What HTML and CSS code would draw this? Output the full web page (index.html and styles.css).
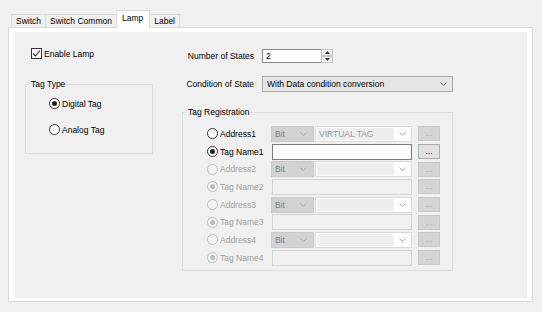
FILE: index.html
```html
<!DOCTYPE html>
<html lang="en">
<head>
    <meta charset="UTF-8">
    <title>Lamp</title>
    <link rel="stylesheet" href="styles.css">
</head>
<body>
<div class="dialog">
    <div class="tabs">
        <div class="tab">Switch</div>
        <div class="tab">Switch Common</div>
        <div class="tab active">Lamp</div>
        <div class="tab">Label</div>
    </div>

    <div class="panel">
        <div class="page">

            <div class="left">
                <div class="check-row">
                    <span class="check">
                        <svg width="9" height="9" viewBox="0 0 9 9"><path d="M1 4.5 L3.5 7 L8 1.5" fill="none" stroke="#222" stroke-width="1.1"/></svg>
                    </span>
                    Enable Lamp
                </div>

                <fieldset class="group tag-type">
                    <legend>Tag Type</legend>
                    <div class="radio-row"><span class="radio on"></span>Digital Tag</div>
                    <div class="radio-row"><span class="radio"></span>Analog Tag</div>
                </fieldset>
            </div>

            <div class="right">
                <div class="field-row">
                    <span class="field-label">Number of States</span>
                    <div class="spin">
                        <span class="spin-value">2</span>
                        <span class="spin-btns">
                            <span class="spin-btn"><svg width="5" height="3" viewBox="0 0 5 3"><path d="M0 3 L2.5 0 L5 3Z" fill="#333"/></svg></span>
                            <span class="spin-btn"><svg width="5" height="3" viewBox="0 0 5 3"><path d="M0 0 L2.5 3 L5 0Z" fill="#333"/></svg></span>
                        </span>
                    </div>
                </div>
                <div class="field-row">
                    <span class="field-label">Condition of State</span>
                    <div class="combo">
                        <span class="combo-text">With Data condition conversion</span>
                        <svg class="chev" width="7" height="4" viewBox="0 0 7 4"><path d="M0.5 0.5 L3.5 3.5 L6.5 0.5" fill="none" stroke="#666"/></svg>
                    </div>
                </div>

                <fieldset class="group tag-reg">
                    <legend>Tag Registration</legend>

                    <div class="reg-row">
                        <span class="reg-label"><span class="radio"></span>Address1</span>
                        <span class="reg-ctrl">
                            <span class="bit">Bit<svg class="chev" width="7" height="4" viewBox="0 0 7 4"><path d="M0.5 0.5 L3.5 3.5 L6.5 0.5" fill="none" stroke="#a8a8a8"/></svg></span>
                            <span class="addr"><span class="addr-field">VIRTUAL TAG</span><svg class="chev" width="7" height="4" viewBox="0 0 7 4"><path d="M0.5 0.5 L3.5 3.5 L6.5 0.5" fill="none" stroke="#b0b0b0"/></svg></span>
                        </span>
                        <span class="dots">...</span>
                    </div>
                    <div class="reg-row">
                        <span class="reg-label"><span class="radio on"></span>Tag Name1</span>
                        <span class="reg-ctrl"><span class="tag-input"></span></span>
                        <span class="dots enabled">...</span>
                    </div>

                    <div class="reg-row off">
                        <span class="reg-label"><span class="radio"></span>Address2</span>
                        <span class="reg-ctrl">
                            <span class="bit">Bit<svg class="chev" width="7" height="4" viewBox="0 0 7 4"><path d="M0.5 0.5 L3.5 3.5 L6.5 0.5" fill="none" stroke="#a8a8a8"/></svg></span>
                            <span class="addr"><span class="addr-field"></span><svg class="chev" width="7" height="4" viewBox="0 0 7 4"><path d="M0.5 0.5 L3.5 3.5 L6.5 0.5" fill="none" stroke="#b0b0b0"/></svg></span>
                        </span>
                        <span class="dots">...</span>
                    </div>
                    <div class="reg-row off">
                        <span class="reg-label"><span class="radio on"></span>Tag Name2</span>
                        <span class="reg-ctrl"><span class="tag-input"></span></span>
                        <span class="dots">...</span>
                    </div>

                    <div class="reg-row off">
                        <span class="reg-label"><span class="radio"></span>Address3</span>
                        <span class="reg-ctrl">
                            <span class="bit">Bit<svg class="chev" width="7" height="4" viewBox="0 0 7 4"><path d="M0.5 0.5 L3.5 3.5 L6.5 0.5" fill="none" stroke="#a8a8a8"/></svg></span>
                            <span class="addr"><span class="addr-field"></span><svg class="chev" width="7" height="4" viewBox="0 0 7 4"><path d="M0.5 0.5 L3.5 3.5 L6.5 0.5" fill="none" stroke="#b0b0b0"/></svg></span>
                        </span>
                        <span class="dots">...</span>
                    </div>
                    <div class="reg-row off">
                        <span class="reg-label"><span class="radio on"></span>Tag Name3</span>
                        <span class="reg-ctrl"><span class="tag-input"></span></span>
                        <span class="dots">...</span>
                    </div>

                    <div class="reg-row off">
                        <span class="reg-label"><span class="radio"></span>Address4</span>
                        <span class="reg-ctrl">
                            <span class="bit">Bit<svg class="chev" width="7" height="4" viewBox="0 0 7 4"><path d="M0.5 0.5 L3.5 3.5 L6.5 0.5" fill="none" stroke="#a8a8a8"/></svg></span>
                            <span class="addr"><span class="addr-field"></span><svg class="chev" width="7" height="4" viewBox="0 0 7 4"><path d="M0.5 0.5 L3.5 3.5 L6.5 0.5" fill="none" stroke="#b0b0b0"/></svg></span>
                        </span>
                        <span class="dots">...</span>
                    </div>
                    <div class="reg-row off">
                        <span class="reg-label"><span class="radio on"></span>Tag Name4</span>
                        <span class="reg-ctrl"><span class="tag-input"></span></span>
                        <span class="dots">...</span>
                    </div>
                </fieldset>
            </div>

        </div>
    </div>
</div>
</body>
</html>
```

FILE: styles.css
```css
body {
    margin: 0;
    background: #f0f0f0;
    font-family: "Liberation Sans", Arial, sans-serif;
    font-size: 8.5px;
    color: #000;
}
.dialog {
    padding: 10px 0 0 8px;
}

/* tabs */
.tabs {
    display: flex;
    align-items: flex-end;
    height: 18px;
    padding-left: 3px;
    margin-bottom: -1px;
    position: relative;
    z-index: 1;
}
.tab {
    height: 14px;
    line-height: 13px;
    padding: 0 4px;
    border: 1px solid #d9d9d9;
    box-sizing: border-box;
    background: #f0f0f0;
    margin-left: -1px;
}
.tab:first-child {
    margin-left: 0;
}
.tab.active {
    height: 18px;
    line-height: 15px;
    padding: 0 6px 0 5px;
    background: #fff;
    border-bottom: none;
}

.panel {
    width: 525px;
    height: 275px;
    box-sizing: border-box;
    border: 1px solid #d9d9d9;
    background: #fff;
    padding: 4px 5px 3px 6px;
}
.page {
    height: 100%;
    background: #f0f0f0;
    display: flex;
}

/* left column */
.left {
    width: 128px;
    padding: 15px 0 0 10px;
}
.check-row {
    display: flex;
    align-items: center;
    height: 13px;
    padding-left: 6px;
}
.check {
    width: 11px;
    height: 11px;
    box-sizing: border-box;
    border: 1px solid #333;
    background: #fff;
    margin-right: 2px;
    display: flex;
    align-items: center;
    justify-content: center;
}
.group {
    margin: 0;
    padding: 0;
    min-width: 0;
    border: 1px solid #dcdcdc;
}
.group legend {
    margin-left: 3px;
    padding: 0 2px;
    line-height: 11px;
}
.tag-type {
    margin-top: 19px;
    height: 66px;
    padding-top: 7px;
}
.tag-type .radio-row {
    margin-left: 23px;
}
.radio-row {
    display: flex;
    align-items: center;
    height: 13px;
    margin-bottom: 13px;
}
.radio {
    width: 11px;
    height: 11px;
    box-sizing: border-box;
    border: 1px solid #333;
    border-radius: 50%;
    background: #fff;
    margin-right: 2px;
    display: flex;
    align-items: center;
    justify-content: center;
    flex: none;
}
.radio.on::after {
    content: "";
    width: 5px;
    height: 5px;
    border-radius: 50%;
    background: #222;
}

/* right column */
.right {
    margin-left: 29px;
    padding-top: 17px;
}
.field-row {
    display: flex;
    align-items: center;
    margin-bottom: 13px;
}
.field-label {
    width: 72px;
    text-align: right;
    margin-right: 8px;
}
.spin {
    width: 71px;
    height: 14px;
    box-sizing: border-box;
    border: 1px solid #8a8a8a;
    background: #fff;
    display: flex;
    justify-content: space-between;
}
.spin-value {
    padding-left: 3px;
    line-height: 12px;
}
.spin-btns {
    display: flex;
    flex-direction: column;
    width: 11px;
}
.spin-btn {
    flex: 1;
    display: flex;
    align-items: center;
    justify-content: center;
    background: #f0f0f0;
    border: 1px solid #c4c4c4;
    margin: -1px -1px 0 0;
}
.spin-btn + .spin-btn {
    margin-top: 0;
    margin-bottom: -1px;
}
.combo {
    width: 191px;
    height: 16px;
    box-sizing: border-box;
    border: 1px solid #adadad;
    background: #e5e5e5;
    display: flex;
    align-items: center;
    justify-content: space-between;
    padding: 0 5px 0 4px;
}

.tag-reg {
    width: 271px;
    height: 164px;
    box-sizing: border-box;
    margin-top: 15px;
    padding-top: 7px;
}
.reg-row {
    display: flex;
    align-items: center;
    height: 17.7px;
    margin-left: 24px;
}
.reg-label {
    display: flex;
    align-items: center;
    width: 64px;
}
.reg-ctrl {
    display: flex;
    width: 141px;
    height: 16px;
}
.bit {
    width: 43px;
    box-sizing: border-box;
    background: #d2d2d2;
    border: 1px solid #cacaca;
    color: #808080;
    display: flex;
    align-items: center;
    justify-content: space-between;
    padding: 0 6px 0 3px;
}
.addr {
    width: 97px;
    margin-left: 1px;
    box-sizing: border-box;
    background: #fff;
    border: 1px solid #dadada;
    padding: 1px;
    display: flex;
    align-items: center;
}
.addr-field {
    flex: 1;
    height: 100%;
    background: #eeeeee;
    color: #949aa6;
    line-height: 12px;
    padding-left: 2px;
}
.addr .chev {
    margin: 0 4px 0 5px;
}
.tag-input {
    flex: 1;
    margin-left: 1px;
    border: 1px solid #7a7a7a;
    background: #fff;
}
.dots {
    width: 22px;
    height: 15px;
    box-sizing: border-box;
    margin-left: 6px;
    background: #d4d4d4;
    border: 1px solid #c8c8c8;
    color: #a8a8a8;
    text-align: center;
    line-height: 12px;
}
.dots.enabled {
    background: #e1e1e1;
    border-color: #adadad;
    color: #222;
}

/* disabled rows */
.reg-row.off .reg-label {
    color: #a0a0a0;
}
.reg-row.off .radio {
    border-color: #bcbcbc;
    background: #f4f4f4;
}
.reg-row.off .radio.on::after {
    background: #bcbcbc;
}
.reg-row.off .tag-input {
    border-color: #d4d4d4;
    background: #f0f0f0;
}
```
